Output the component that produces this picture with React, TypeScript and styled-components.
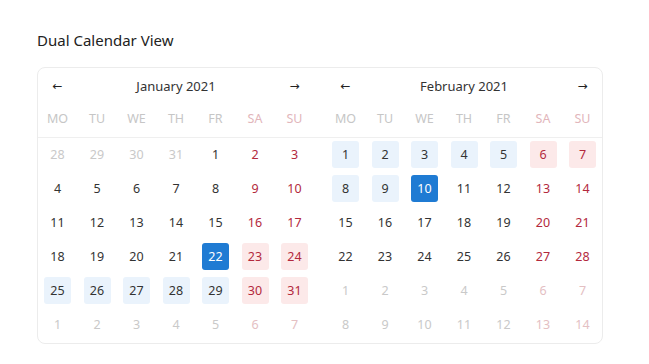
import React from 'react';
import styled, { createGlobalStyle } from 'styled-components';

const GlobalStyle = createGlobalStyle`
  body {
    margin: 0;
    background: #ffffff;
    font-family: 'Noto Sans', 'Open Sans', sans-serif;
    color: #333333;
  }
`;

const Page = styled.div`
  padding: 29px 37px 0;
`;

const Title = styled.h1`
  margin: 0 0 16px;
  font-size: 15px;
  font-weight: 400;
  line-height: 22px;
  color: #222222;
`;

const Frame = styled.div`
  display: flex;
  width: 564px;
  border: 1px solid #ececec;
  border-radius: 8px;
`;

const Month = styled.div<{ $side: 'left' | 'right' }>`
  display: flex;
  flex-direction: column;
  padding: ${(p) => (p.$side === 'left' ? '0 12px 5px 6px' : '0 6px 5px 12px')};
`;

const MonthHead = styled.div`
  display: flex;
  align-items: center;
  justify-content: space-between;
  height: 36px;
`;

const Arrow = styled.button`
  width: 27px;
  padding: 0;
  border: 0;
  background: none;
  font-family: 'DejaVu Sans', sans-serif;
  font-size: 12px;
  color: #222222;
  cursor: pointer;
`;

const MonthName = styled.span`
  font-size: 13px;
  color: #333333;
`;

const WeekRow = styled.div`
  display: grid;
  grid-template-columns: repeat(7, 27px);
  column-gap: 12.5px;
  height: 28px;
  align-items: center;
  padding-bottom: 5px;
  margin: 0 ${(p: { $side: 'left' | 'right' }) => (p.$side === 'left' ? '-12px 0 -6px' : '-6px 0 -12px')};
  padding-left: ${(p: { $side: 'left' | 'right' }) => (p.$side === 'left' ? '6px' : '12px')};
  padding-right: ${(p: { $side: 'left' | 'right' }) => (p.$side === 'left' ? '12px' : '6px')};
  border-bottom: 1px solid #efefef;
`;

const WeekDay = styled.span<{ $weekend?: boolean }>`
  text-align: center;
  font-size: 12.5px;
  color: ${(p) => (p.$weekend ? '#e2b6bb' : '#c6c6c6')};
`;

const DayGrid = styled.div`
  display: grid;
  grid-template-columns: repeat(7, 27px);
  grid-auto-rows: 27px;
  column-gap: 12.5px;
  row-gap: 7px;
  margin-top: 3px;
`;

type Tone = 'plain' | 'range' | 'selected';

const Day = styled.div<{ $tone: Tone; $weekend: boolean; $muted: boolean }>`
  display: flex;
  align-items: center;
  justify-content: center;
  border-radius: 3px;
  font-size: 12.5px;
  background: ${(p) =>
    p.$tone === 'selected' ? '#1f7bd3' : p.$tone === 'range' ? (p.$weekend ? '#fce9e9' : '#eaf3fc') : 'transparent'};
  color: ${(p) => {
    if (p.$tone === 'selected') return '#ffffff';
    if (p.$muted) return p.$weekend ? '#e4c0c3' : '#c9c9c9';
    return p.$weekend ? '#b3293d' : '#333333';
  }};
`;

const WEEK = ['MO', 'TU', 'WE', 'TH', 'FR', 'SA', 'SU'];

type Cell = { n: number; muted: boolean; tone: Tone };

const buildCells = (
  lead: number[],
  days: number,
  trail: number,
  tone: (d: number) => Tone,
): Cell[] => {
  const cells: Cell[] = lead.map((n) => ({ n, muted: true, tone: 'plain' }));
  for (let d = 1; d <= days; d++) cells.push({ n: d, muted: false, tone: tone(d) });
  for (let d = 1; d <= trail; d++) cells.push({ n: d, muted: true, tone: 'plain' });
  return cells;
};

const january = buildCells([28, 29, 30, 31], 31, 7, (d) =>
  d === 22 ? 'selected' : d > 22 ? 'range' : 'plain',
);
const february = buildCells([], 28, 14, (d) =>
  d === 10 ? 'selected' : d < 10 ? 'range' : 'plain',
);

const MonthView = ({ name, cells, side }: { name: string; cells: Cell[]; side: 'left' | 'right' }) => (
  <Month $side={side}>
    <MonthHead>
      <Arrow>←</Arrow>
      <MonthName>{name}</MonthName>
      <Arrow>→</Arrow>
    </MonthHead>
    <WeekRow $side={side}>
      {WEEK.map((w, i) => (
        <WeekDay key={w} $weekend={i >= 5}>
          {w}
        </WeekDay>
      ))}
    </WeekRow>
    <DayGrid>
      {cells.map((c, i) => (
        <Day key={i} $tone={c.tone} $weekend={i % 7 >= 5} $muted={c.muted}>
          {c.n}
        </Day>
      ))}
    </DayGrid>
  </Month>
);

const App = (): JSX.Element => {
  return (
    <Page>
      <GlobalStyle />
      <Title>Dual Calendar View</Title>
      <Frame>
        <MonthView name="January 2021" cells={january} side="left" />
        <MonthView name="February 2021" cells={february} side="right" />
      </Frame>
    </Page>
  );
};

export default App;
